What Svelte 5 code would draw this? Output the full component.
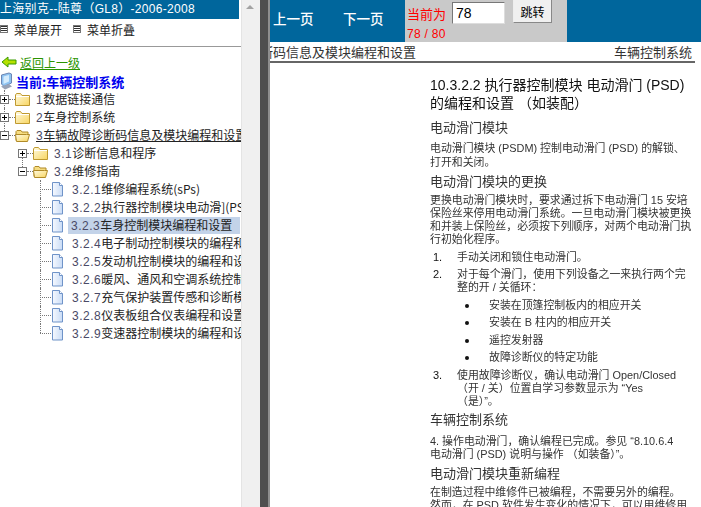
<script>
  const top = [
    { open: false, num: '1', label: '数据链接通信' },
    { open: false, num: '2', label: '车身控制系统' },
    { open: true, num: '3', label: '车辆故障诊断码信息及模块编程和设置', ul: true, last: true }
  ];
  const leaves = [
    ['3.2.1', '维修编程系统(sPs)'],
    ['3.2.2', '执行器控制模块电动滑](PSD)的编程'],
    ['3.2.3', '车身控制模块编程和设置'],
    ['3.2.4', '电子制动控制模块的编程和设置'],
    ['3.2.5', '发动机控制模块的编程和设置'],
    ['3.2.6', '暖风、通风和空调系统控制模块'],
    ['3.2.7', '充气保护装置传感和诊断模块'],
    ['3.2.8', '仪表板组合仪表编程和设置说明'],
    ['3.2.9', '变速器控制模块的编程和设置']
  ];
</script>

{#snippet box(open)}
  <svg class="box" width="9" height="9" viewBox="0 0 9 9">
    <rect x=".5" y=".5" width="8" height="8" fill="#fff" stroke="#777" />
    <path d="M2 4.500h5" stroke="#000" />
    {#if !open}<path d="M4.500 2v5" stroke="#000" />{/if}
  </svg>
{/snippet}

{#snippet folder(open)}
  <svg class="folder" width="15" height="13" viewBox="0 0 15 13">
    <defs>
      <linearGradient id="fg" x1="0" y1="0" x2="1" y2="1">
        <stop offset="0" stop-color="#fffbe2" />
        <stop offset="1" stop-color="#f8d560" />
      </linearGradient>
    </defs>
    {#if open}
      <path d="M1 11.500V2.500l1-1h4l1 1.500h6v2" fill="#f6dc80" stroke="#b08a28" />
      <path d="M.500 5.500h11l3 0-2 7h-11z" fill="url(#fg)" stroke="#b08a28" />
    {:else}
      <path d="M.500 12.500V2l1-1.500h4L7 2.500h7.500v10z" fill="url(#fg)" stroke="#c09a30" />
      <path d="M1 3.500h13" stroke="#fff" />
    {/if}
  </svg>
{/snippet}

{#snippet page()}
  <svg class="page" width="13" height="15" viewBox="0 0 13 15">
    <defs>
      <linearGradient id="pg" x1="0" y1="0" x2="1" y2="0">
        <stop offset="0" stop-color="#f6f9ff" />
        <stop offset="1" stop-color="#c9dcf6" />
      </linearGradient>
    </defs>
    <path d="M1.500.5h7l3 3v10.500h-10z" fill="url(#pg)" stroke="#6f93c8" />
    <path d="M8.500.5v3h3" fill="#fff" stroke="#6f93c8" />
  </svg>
{/snippet}

<div class="shell">
  <aside class="side">
    <div class="tree-pane">
      <div class="side-title">上海别克--陆尊（GL8）-2006-2008</div>
      <div class="menu-row">
        <span class="menu-item"><i class="menu-ico"></i>菜单展开</span>
        <span class="menu-item"><i class="menu-ico"></i>菜单折叠</span>
      </div>
      <div class="rule"></div>
      <a class="back" href="#top">
        <svg width="16" height="12" viewBox="0 0 16 12"><path d="M1 6 7 1v3h8v4H7v3z" fill="#b5e000" stroke="#3a9a00" /></svg>
        <span>返回上一级</span>
      </a>
      <div class="current">
        <svg width="13" height="18" viewBox="0 0 13 18">
          <path d="M1.500 3 9 1l2.500 1v9L4 14.500 1.500 12z" fill="#8fc4f2" stroke="#6c86b4" />
          <path d="M3.500 4.500 9 3v6.500l-5.500 2.500z" fill="#d5ecfd" />
          <path d="M1 14.500 9 12l3 2.500-7 3z" fill="#98a2b6" />
        </svg>
        <b>当前:车辆控制系统</b>
      </div>
      <div class="tree">
        {#each top as n}
          <div class="row trunk" class:end={n.last}>
            <span class="conn">{@render box(n.open)}<i class="dots"></i></span>
            {@render folder(n.open)}
            <span class="label" class:ul={n.ul}><span class="num">{n.num}</span>{n.label}</span>
          </div>
        {/each}
        <div class="row lv2 first">
          <span class="conn">{@render box(false)}<i class="dots"></i></span>
          {@render folder(false)}
          <span class="label"><span class="num">3.1</span>诊断信息和程序</span>
        </div>
        <div class="row lv2 second">
          <span class="conn">{@render box(true)}<i class="dots"></i></span>
          {@render folder(true)}
          <span class="label"><span class="num">3.2</span>维修指南</span>
        </div>
        {#each leaves as [num, text], i}
          <div class="row lv3" class:end={i === leaves.length - 1}>
            <i class="leaf-dots"></i>
            {@render page()}
            <span class="label" class:sel={i === 2}><span class="num">{num}</span>{text}</span>
          </div>
        {/each}
      </div>
    </div>
    <div class="scrollbar">
      <span class="arrow up"></span>
    </div>
  </aside>
  <div class="split"></div>
  <main class="main">
    <div class="topbar">
      <span class="nav">上一页</span>
      <span class="nav next">下一页</span>
      <div class="jump">
        <div class="jump-line">
          <span class="jump-text">当前为</span>
          <input class="jump-input" value="78" />
          <button class="jump-btn">跳转</button>
        </div>
        <div class="pages">78 / 80</div>
      </div>
    </div>
    <div class="doc">
      <div class="doc-head">
        <span class="doc-left">断码信息及模块编程和设置</span>
        <span class="doc-right">车辆控制系统</span>
      </div>
      <div class="doc-body">
        <h1>10.3.2.2 执行器控制模块 电动滑门 (PSD)<br />的编程和设置 （如装配）</h1>
        <h2>电动滑门模块</h2>
        <p class="intro">电动滑门模块 (PSDM) 控制电动滑门 (PSD) 的解锁、<br />打开和关闭。</p>
        <h2>电动滑门模块的更换</h2>
        <p>更换电动滑门模块时，要求通过拆下电动滑门 15 安培<br />保险丝来停用电动滑门系统。一旦电动滑门模块被更换<br />和并装上保险丝，必须按下列顺序，对两个电动滑门执<br />行初始化程序。</p>
        <div class="step"><span>1.</span><div>手动关闭和锁住电动滑门。</div></div>
        <div class="step"><span>2.</span><div>对于每个滑门，使用下列设备之一来执行两个完<br />整的开 / 关循环：</div></div>
        <div class="bullet">安装在顶篷控制板内的相应开关</div>
        <div class="bullet">安装在 B 柱内的相应开关</div>
        <div class="bullet">遥控发射器</div>
        <div class="bullet">故障诊断仪的特定功能</div>
        <div class="step"><span>3.</span><div>使用故障诊断仪，确认电动滑门 Open/Closed<br />（开 / 关）位置自学习参数显示为 “Yes<br />（是）”。</div></div>
        <h2>车辆控制系统</h2>
        <p class="note">4. 操作电动滑门，确认编程已完成。参见 “8.10.6.4<br />电动滑门 (PSD) 说明与操作 （如装备）”。</p>
        <h2>电动滑门模块重新编程</h2>
        <p>在制造过程中维修件已被编程，不需要另外的编程。<br />然而，在 PSD 软件发生变化的情况下，可以用维修用</p>
      </div>
    </div>
  </main>
</div>

<style>
  :global(body) { margin: 0; overflow: hidden; background: #fff; }
  .shell {
    display: flex;
    width: 701px;
    height: 507px;
    overflow: hidden;
    font-family: "Noto Sans CJK SC", sans-serif;
  }
  .side { display: flex; width: 260px; flex: none; }
  .tree-pane { width: 241px; flex: none; overflow: hidden; background: #fff; }
  .side-title {
    width: 239px;
    height: 19px;
    background: #00669c;
    color: #fff;
    font: 12px/18px "Liberation Sans", "Noto Sans CJK SC", sans-serif;
    letter-spacing: .3px;
    white-space: nowrap;
  }
  .menu-row {
    display: flex;
    height: 27px;
    font-size: 12px;
    color: #222;
  }
  .menu-item { display: flex; align-items: center; height: 20px; width: 73px; }
  .menu-ico {
    width: 6px;
    height: 6px;
    margin-right: 6px;
    border: 1px solid #777;
    background: repeating-linear-gradient(#333 0 1px, #fff 1px 2px);
  }
  .rule { height: 1px; background: #999; }
  .back {
    display: flex;
    align-items: center;
    gap: 3px;
    height: 20px;
    margin-top: 5px;
    padding-left: 1px;
    color: #2b9400;
    font-size: 12px;
    text-decoration: none;
  }
  .back span { text-decoration: underline; }
  .current {
    display: flex;
    align-items: center;
    gap: 3px;
    height: 18px;
    font-size: 13px;
    color: #0000ee;
    white-space: nowrap;
  }
  .row {
    position: relative;
    display: flex;
    align-items: center;
    height: 18px;
    white-space: nowrap;
    font-size: 12px;
    color: #222;
  }
  .trunk::before, .lv2.first::before, .lv3::before {
    content: "";
    position: absolute;
    top: 0;
    bottom: 0;
    border-left: 1px dotted #777;
  }
  .trunk::before { left: 4px; }
  .trunk.end::before { bottom: 9px; }
  .lv2.first::before { left: 22px; top: 9px; bottom: -9px; }
  .lv3::before { left: 40px; }
  .lv3.end::before { bottom: 9px; }
  .conn { position: relative; display: flex; align-items: center; flex: none; width: 15px; }
  .box { position: relative; flex: none; }
  .dots { width: 6px; border-top: 1px dotted #777; }
  .folder { flex: none; margin-right: 5px; }
  .label { padding: 0 1px; line-height: 16px; }
  .ul { text-decoration: underline; }
  .num { font-family: "Liberation Sans", sans-serif; color: #4a4a66; letter-spacing: .5px; }
  .lv2 { padding-left: 18px; }
  .lv3 { padding-left: 40px; }
  .leaf-dots { width: 11px; border-top: 1px dotted #777; flex: none; }
  .page { flex: none; margin-right: 7px; }
  .sel {
    background: #c3d3e9;
    width: 168px;
    margin-left: -3px;
    padding-left: 3px;
    flex: none;
    overflow: hidden;
  }
  .scrollbar {
    position: relative;
    width: 19px;
    flex: none;
    background: #f0f0f0;
    border-left: 1px solid #e4e4e4;
    box-sizing: border-box;
  }
  .arrow {
    position: absolute;
    left: 4px;
    border: 4px solid transparent;
  }
  .arrow.up { top: 1px; border-bottom-color: #a3a3a3; }
  .split {
    width: 10px;
    flex: none;
    background: #4f4f4f;
    border-right: 2px solid #8f8f8f;
    box-sizing: border-box;
  }
  .main { flex: 1; min-width: 0; overflow: hidden; background: #fff; }
  .topbar {
    display: flex;
    align-items: flex-start;
    height: 42px;
    background: #00669c;
    color: #fff;
  }
  .nav {
    margin-top: 10px;
    font-size: 13.500px;
    line-height: 17px;
    font-weight: 500;
    margin-left: 3px;
    width: 70px;
    flex: none;
  }
  .nav.next { margin-left: 0; width: 62px; }
  .jump {
    width: 162px;
    height: 42px;
    background: #c9c9c9;
    padding-left: 2px;
    box-sizing: border-box;
    color: #f00;
    font-size: 13px;
  }
  .jump-line { display: flex; align-items: flex-start; height: 24px; }
  .jump-text { margin-top: 6px; line-height: 16px; width: 45px; flex: none; }
  .jump-input {
    width: 53px;
    height: 22px;
    margin: 2px 0 0;
    padding: 0 3px;
    border: 1px solid #777;
    border-right-color: #ddd;
    border-bottom-color: #ddd;
    box-sizing: border-box;
    font: 14px "Liberation Sans", sans-serif;
    color: #000;
  }
  .jump-btn {
    width: 39px;
    height: 24px;
    margin: -1px 0 0 8px;
    padding: 0;
    border: 1px solid #888;
    border-top-color: #eee;
    border-left-color: #eee;
    background: #f0f0f0;
    font: 12px "Noto Sans CJK SC", sans-serif;
    color: #000;
  }
  .pages {
    font: 12px/14px "Liberation Sans", sans-serif;
    letter-spacing: .3px;
    margin-top: 3px;
  }
  .doc { height: 465px; overflow: hidden; }
  .doc-head {
    display: flex;
    justify-content: space-between;
    height: 19px;
    width: 425px;
    border-bottom: 2px solid #666;
    overflow: hidden;
    font-size: 13px;
    line-height: 20px;
    color: #333;
    white-space: nowrap;
  }
  .doc-left { margin-left: -10px; }
  .doc-right { margin-right: 3px; }
  .doc-body {
    margin-left: 160px;
    padding-top: 13px;
    font: 10.900px/13px "Liberation Sans", "Noto Sans CJK SC", sans-serif;
    color: #333;
    width: 270px;
    filter: blur(.3px);
  }
  h1 {
    margin: 0 0 8px;
    font: 14px/18px "Liberation Sans", "Noto Sans CJK SC", sans-serif;
    color: #111;
    white-space: nowrap;
  }
  h2 {
    margin: 4.500px 0;
    font: 13px/16px "Liberation Sans", "Noto Sans CJK SC", sans-serif;
    color: #333;
  }
  p { margin: 0; white-space: nowrap; }
  .intro { margin-top: 5px; line-height: 14px; }
  .note { margin-top: 7px; }
  .step { display: flex; margin-top: 4.500px; white-space: nowrap; }
  .step span { width: 27px; flex: none; padding-left: 3px; box-sizing: border-box; color: #111; font-size: 11px; }
  .bullet { position: relative; margin-top: 4.600px; padding-left: 59px; white-space: nowrap; }
  .bullet::before {
    content: "";
    position: absolute;
    left: 35px;
    top: 5px;
    width: 4px;
    height: 4px;
    border-radius: 50%;
    background: #111;
  }
</style>
